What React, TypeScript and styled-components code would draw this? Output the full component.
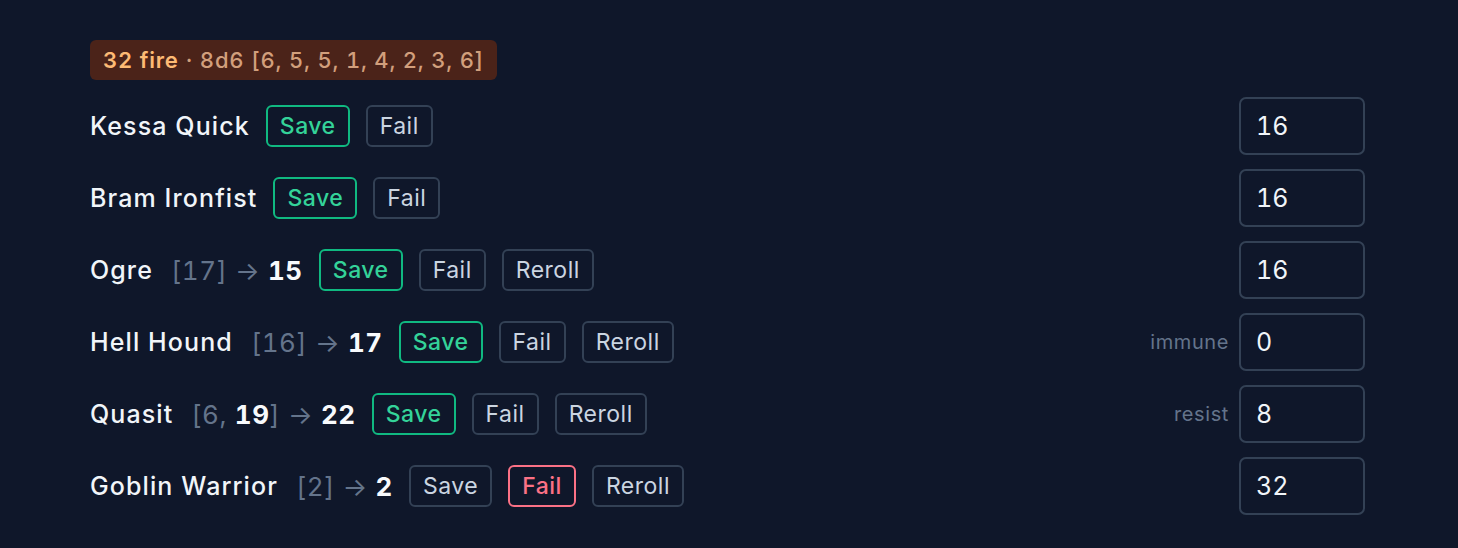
import React from "react";
import styled, { createGlobalStyle } from "styled-components";

const Global = createGlobalStyle`
  html, body { margin: 0; padding: 0; background: #0f172a; }
  body {
    font-family: Inter, "Noto Sans", sans-serif;
    color: #f1f5f9;
    font-variant-numeric: tabular-nums;
  }
  * { box-sizing: border-box; }
`;

const Page = styled.div`
  min-height: 548px;
  padding: 40px 93px 0 90px;
  display: flex;
  flex-direction: column;
  gap: 17px;
`;

const Badge = styled.div`
  align-self: flex-start;
  height: 40px;
  padding: 0 13px;
  display: flex;
  align-items: center;
  gap: 7px;
  border-radius: 6px;
  background: #4b2319;
  font-size: 22px;
  letter-spacing: 0.8px;
  color: #d29f7c;
  font-weight: 500;
`;

const BadgeStrong = styled.span`
  color: #fdba74;
  font-weight: 600;
`;

const List = styled.div`
  display: flex;
  flex-direction: column;
  gap: 14px;
`;

const Row = styled.div`
  display: flex;
  align-items: center;
  height: 58px;
  gap: 16px;
`;

const Name = styled.span`
  font-size: 25px;
  letter-spacing: 1.1px;
  font-weight: 500;
  color: #f1f5f9;
`;

const Roll = styled.span`
  font-size: 26px;
  letter-spacing: 0.6px;
  color: #64748b;
  margin-left: 2px;
  white-space: pre;
`;

const Strong = styled.span`
  color: #f8fafc;
  font-weight: 700;
`;

type Tone = "save" | "fail" | "plain";

const Btn = styled.button<{ $tone: Tone }>`
  height: 42px;
  padding: 0 12px;
  border-radius: 6px;
  background: transparent;
  font-family: Inter, "Noto Sans", sans-serif;
  font-size: 23px;
  letter-spacing: 0.5px;
  font-weight: ${(p) => (p.$tone === "plain" ? 400 : 500)};
  border: 2px solid
    ${(p) => (p.$tone === "save" ? "#10b981" : p.$tone === "fail" ? "#fb7185" : "#334155")};
  color: ${(p) => (p.$tone === "save" ? "#34d399" : p.$tone === "fail" ? "#fb7185" : "#cbd5e1")};
`;

const Right = styled.div`
  margin-left: auto;
  display: flex;
  align-items: center;
  gap: 10px;
`;

const Tag = styled.span`
  font-size: 20px;
  letter-spacing: 0.6px;
  color: #64748b;
`;

const Input = styled.input`
  width: 126px;
  height: 58px;
  padding: 0 15px;
  border: 2px solid #334155;
  border-radius: 7px;
  background: #0f172a;
  color: #f1f5f9;
  font-family: Inter, "Noto Sans", sans-serif;
  font-variant-numeric: tabular-nums;
  font-size: 25px;
  outline: none;
`;

type RollPart = { v: number; hi?: boolean };
type Entry = {
  name: string;
  rolls?: RollPart[];
  total?: number;
  state: "save" | "fail";
  reroll: boolean;
  tag?: string;
  dmg: string;
};

const entries: Entry[] = [
  { name: "Kessa Quick", state: "save", reroll: false, dmg: "16" },
  { name: "Bram Ironfist", state: "save", reroll: false, dmg: "16" },
  { name: "Ogre", rolls: [{ v: 17 }], total: 15, state: "save", reroll: true, dmg: "16" },
  { name: "Hell Hound", rolls: [{ v: 16 }], total: 17, state: "save", reroll: true, tag: "immune", dmg: "0" },
  { name: "Quasit", rolls: [{ v: 6 }, { v: 19, hi: true }], total: 22, state: "save", reroll: true, tag: "resist", dmg: "8" },
  { name: "Goblin Warrior", rolls: [{ v: 2 }], total: 2, state: "fail", reroll: true, dmg: "32" },
];

export default function App() {
  return (
    <>
      <Global />
      <Page>
        <Badge>
          <BadgeStrong>32 fire</BadgeStrong>
          <span>· 8d6 [6, 5, 5, 1, 4, 2, 3, 6]</span>
        </Badge>
        <List>
          {entries.map((e) => (
            <Row key={e.name}>
              <Name>{e.name}</Name>
              {e.rolls && (
                <Roll>
                  [
                  {e.rolls.map((r, i) => (
                    <React.Fragment key={i}>
                      {i > 0 && ", "}
                      {r.hi ? <Strong>{r.v}</Strong> : r.v}
                    </React.Fragment>
                  ))}
                  ] → <Strong>{e.total}</Strong>
                </Roll>
              )}
              <Btn $tone={e.state === "save" ? "save" : "plain"}>Save</Btn>
              <Btn $tone={e.state === "fail" ? "fail" : "plain"}>Fail</Btn>
              {e.reroll && <Btn $tone="plain">Reroll</Btn>}
              <Right>
                {e.tag && <Tag>{e.tag}</Tag>}
                <Input defaultValue={e.dmg} />
              </Right>
            </Row>
          ))}
        </List>
      </Page>
    </>
  );
}
